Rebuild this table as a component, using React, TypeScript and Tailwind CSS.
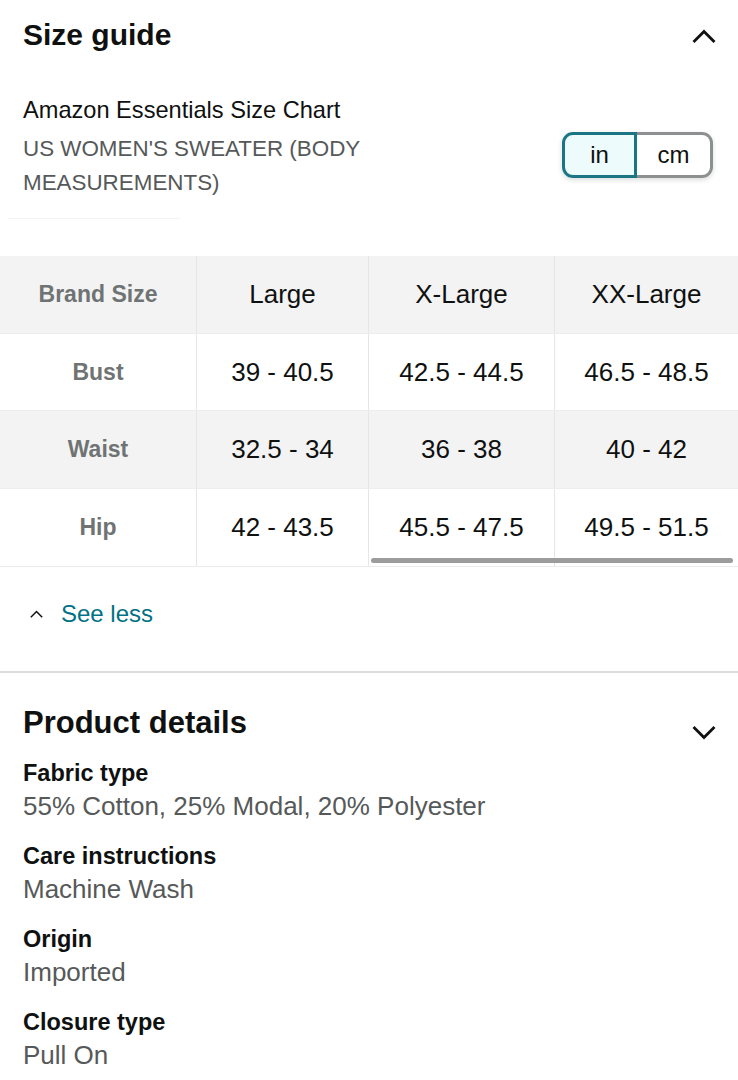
import React from "react";

const rows = [
  { label: "Bust", values: ["39 - 40.5", "42.5 - 44.5", "46.5 - 48.5"], shaded: false, h: "h-[77px]" },
  { label: "Waist", values: ["32.5 - 34", "36 - 38", "40 - 42"], shaded: true, h: "h-[78px]" },
  { label: "Hip", values: ["42 - 43.5", "45.5 - 47.5", "49.5 - 51.5"], shaded: false, h: "h-[78px]" },
];

const colWidths = ["w-[172px]", "w-[186px]", "w-[184px]"];

const details = [
  { label: "Fabric type", value: "55% Cotton, 25% Modal, 20% Polyester" },
  { label: "Care instructions", value: "Machine Wash" },
  { label: "Origin", value: "Imported" },
  { label: "Closure type", value: "Pull On" },
];

const Chevron = ({ up, className }: { up?: boolean; className?: string }) => (
  <svg viewBox="0 0 24 14" className={className} fill="none" stroke="currentColor" strokeWidth={2.8} strokeLinecap="square">
    {up ? <polyline points="2.5,12 12,2.5 21.5,12" /> : <polyline points="2.5,2 12,11.5 21.5,2" />}
  </svg>
);

const App = () => {
  return (
    <div className="w-[738px] min-h-[1080px] bg-white text-[#0f1111] font-['Liberation_Sans',Arial,sans-serif]">
      {/* Size guide header */}
      <div className="flex items-center justify-between h-[70px] pl-[23px] pr-[22px]">
        <h2 className="text-[30px] leading-[40px] font-bold">Size guide</h2>
        <Chevron up className="w-[24px] h-[14px] mt-[2px]" />
      </div>

      {/* chart info + unit toggle */}
      <div className="flex items-start justify-between pl-[23px] pr-[25px] pt-[23px]">
        <div className="max-w-[420px]">
          <p className="text-[23.6px] leading-[34px]">Amazon Essentials Size Chart</p>
          <p className="mt-[5px] text-[22.4px] leading-[34px] text-[#565959]">
            US WOMEN'S SWEATER (BODY MEASUREMENTS)
          </p>
        </div>
        <div className="flex mt-[39px] rounded-[11px] shadow-[0_2px_5px_rgba(15,17,17,0.15)]">
          <div className="w-[75px] h-[46px] flex items-center justify-center text-[24px] border-[3px] border-[#1b7585] bg-[#edfbfd] rounded-l-[11px]">
            in
          </div>
          <div className="w-[76px] h-[46px] flex items-center justify-center text-[24px] border-[3px] border-l-0 border-[#8d9090] bg-white rounded-r-[11px]">
            cm
          </div>
        </div>
      </div>

      <div className="ml-[8px] mt-[18px] w-[172px] h-px bg-[#f3f3f3]" />

      {/* table */}
      <div className="relative mt-[37px] border-b border-[#ececec]">
        <div className="flex h-[77px] bg-[#f3f3f3]">
          <div className="w-[196px] flex items-center justify-center text-[23px] font-bold text-[#6f7373]">Brand Size</div>
          {["Large", "X-Large", "XX-Large"].map((s, i) => (
            <div key={s} className={`${colWidths[i]} flex items-center justify-center text-[26px] border-l border-[#e6e6e6]`}>
              {s}
            </div>
          ))}
        </div>
        {rows.map((r) => (
          <div key={r.label} className={`flex ${r.h} border-t border-[#ededed] ${r.shaded ? "bg-[#f3f3f3]" : "bg-white"}`}>
            <div className="w-[196px] flex items-center justify-center text-[23px] font-bold text-[#6f7373]">{r.label}</div>
            {r.values.map((v, i) => (
              <div key={v} className={`${colWidths[i]} flex items-center justify-center text-[26px] border-l border-[#e6e6e6]`}>
                {v}
              </div>
            ))}
          </div>
        ))}
        <div className="absolute left-[371px] right-[5px] bottom-[3px] h-[5px] rounded-full bg-[#9c9c9c]" />
      </div>

      {/* see less */}
      <div className="flex items-center h-[30px] mt-[32px] pl-[30px]">
        <Chevron up className="w-[13px] h-[8px] text-[#0f1111]" />
        <span className="ml-[18px] text-[24px] leading-[30px] text-[#007185]">See less</span>
      </div>

      <div className="mt-[42px] h-[2px] bg-[#dcdede]" />

      {/* product details */}
      <div className="flex items-center justify-between h-[40px] mt-[30px] pl-[23px] pr-[22px]">
        <h2 className="text-[31px] leading-[40px] font-bold">Product details</h2>
        <Chevron className="w-[24px] h-[14px] mt-[20px]" />
      </div>
      <div className="pl-[23px] mt-[14px] flex flex-col gap-[17px]">
        {details.map((d) => (
          <div key={d.label}>
            <p className="text-[23.5px] leading-[33px] font-bold">{d.label}</p>
            <p className="text-[26px] leading-[33px] text-[#565959]">{d.value}</p>
          </div>
        ))}
      </div>
    </div>
  );
};

export default App;
